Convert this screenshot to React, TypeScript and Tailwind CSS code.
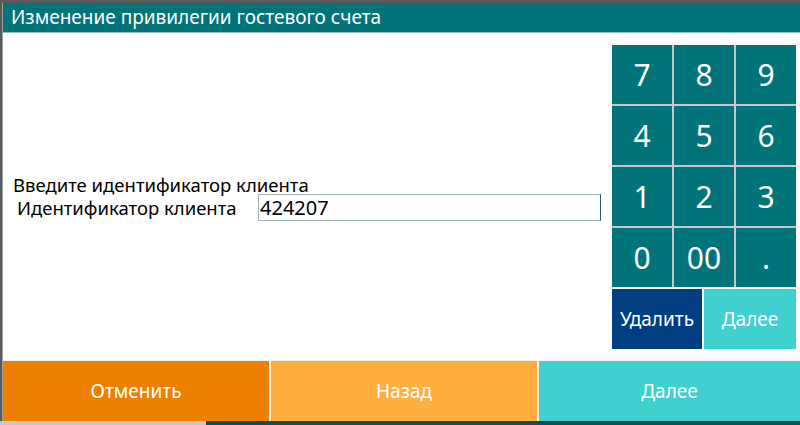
import React, { useState } from 'react';

const keys = ['7', '8', '9', '4', '5', '6', '1', '2', '3', '0', '00', '.'];

export default function App() {
  const [value, setValue] = useState('424207');

  const press = (k: string) => setValue((v) => v + k);

  return (
    <div
      className="w-[800px] h-[425px] bg-[#5a5a5a] overflow-hidden flex flex-col"
      style={{ fontFamily: '"Noto Sans", "Open Sans", sans-serif' }}
    >
      {/* Dialog window */}
      <div className="mt-[3px] ml-[2px] h-[418px] flex flex-col bg-white border-l border-[#a0a0a0]">
        {/* Title */}
        <div className="h-[30px] bg-[#007479] text-white text-[19px] leading-[29px] pl-[8px] border-b border-[#9bb]">
          Изменение привилегии гостевого счета
        </div>

        {/* Body */}
        <div className="flex-1 flex">
          <div className="flex-1 flex flex-col pt-[142px] pl-[10px]">
            <div className="text-[18.5px] text-black leading-[19px]">Введите идентификатор клиента</div>
            <div className="flex items-center h-[27px]">
              <span className="text-[18.5px] text-black pl-[4px] w-[245px]">Идентификатор клиента</span>
              <input
                value={value}
                onChange={(e) => setValue(e.target.value)}
                className="w-[343px] h-[27px] border border-[#9fb3b3] border-r-[#1d5e66] px-[1px] text-[20px] text-black outline-none"
              />
            </div>
          </div>

          {/* Keypad */}
          <div className="w-[184px] mr-[4px] mt-[12px] flex flex-col">
            <div className="grid grid-cols-3 gap-[2px] bg-[#c8c8c8]">
              {keys.map((k) => (
                <button
                  key={k}
                  onClick={() => press(k)}
                  className="h-[59px] bg-[#007479] text-white text-[30px] flex items-center justify-center"
                >
                  {k}
                </button>
              ))}
            </div>
            <div className="flex gap-[2px] mt-[2px]">
              <button className="w-[90px] h-[60px] bg-[#003e80] text-white text-[19px]">Удалить</button>
              <button className="flex-1 h-[60px] bg-[#40d0d0] text-white text-[19px]">Далее</button>
            </div>
          </div>
        </div>

        {/* Footer buttons */}
        <div className="h-[61px] mt-[9px] flex gap-[2px] bg-[#f0f0f0] pt-[1px]">
          <button className="w-[266px] bg-[#ee8000] text-white text-[19px]">Отменить</button>
          <button className="w-[266px] bg-[#ffae40] text-white text-[19px]">Назад</button>
          <button className="flex-1 bg-[#40d0d0] text-white text-[19px]">Далее</button>
        </div>
      </div>
      <div className="flex-1 flex">
        <div className="w-[206px] bg-[#c8c8c8]" />
        <div className="flex-1 bg-[#0b4f55]" />
      </div>
    </div>
  );
}
